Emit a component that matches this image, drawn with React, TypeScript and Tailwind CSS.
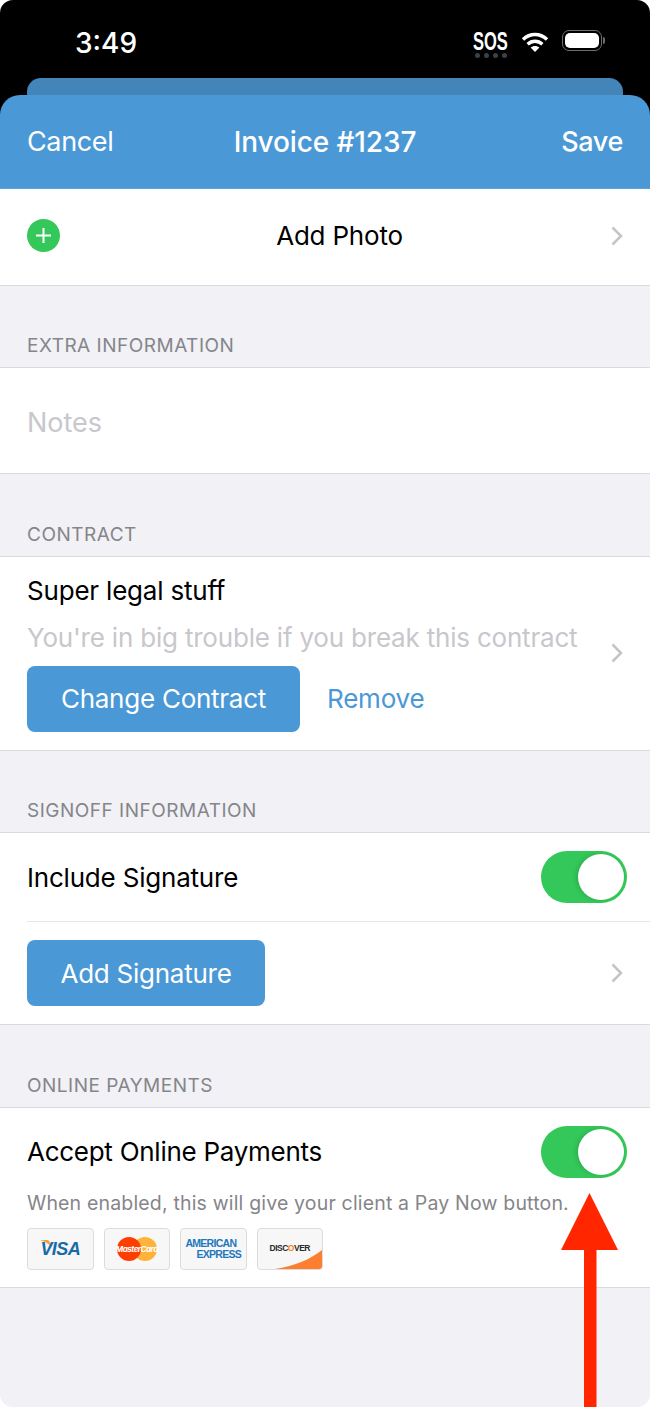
const font = { fontFamily: "Inter, 'Liberation Sans', sans-serif" };
const arial = { fontFamily: "'Liberation Sans', sans-serif" };

function Chevron() {
  return (
    <svg width="12" height="20" viewBox="0 0 12 20" fill="none" stroke="#c4c4c8" strokeWidth="2.5">
      <path d="M1.5 1.5L10 10L1.5 18.5" />
    </svg>
  );
}

function SectionLabel({ title, height }: { title: string; height: string }) {
  return (
    <div className={`flex items-end border-b border-[#d9d9de] px-[27px] pb-[9px] ${height}`}>
      <span className="text-[19px] leading-[24px] tracking-[0.5px] text-[#85858a]">{title}</span>
    </div>
  );
}

function Toggle() {
  return (
    <div className="flex h-[52px] w-[86px] items-center justify-end rounded-full bg-[#34c759] p-[3px]">
      <div className="h-[46px] w-[46px] rounded-full bg-white shadow-[-2px_0_4px_rgba(0,0,0,0.12)]" />
    </div>
  );
}

function BlueButton({ label, width }: { label: string; width: string }) {
  return (
    <div className={`flex h-[66px] items-center justify-center rounded-[8px] bg-[#4a98d6] text-[26px] tracking-[-0.25px] text-white ${width}`}>
      {label}
    </div>
  );
}

function CardLogo({ children }: { children: React.ReactNode }) {
  return (
    <div className="relative flex h-[42px] w-[66.5px] items-center justify-center overflow-hidden rounded-[4px] border border-[#dcdcdc] bg-[#f7f7f7]">
      {children}
    </div>
  );
}

export default function App() {
  return (
    <div className="relative h-[1407px] w-[650px] overflow-hidden bg-white" style={font}>
      <div className="h-full overflow-hidden rounded-[13px] bg-[#f1f1f6]">
        <div className="bg-black">
          <div className="flex h-[78px] items-start justify-between pl-[75px] pr-[45px] pt-[26px]">
            <span className="text-[28px] font-medium leading-[34px] text-white">3:49</span>
            <div className="flex items-start gap-[13px] pt-[4px]">
              <div className="flex w-[35px] flex-col items-center">
                <span className="scale-x-[0.66] text-[25px] font-bold leading-[22px] text-white" style={arial}>SOS</span>
                <div className="mt-[1px] flex gap-[4px]">
                  <i className="h-[5px] w-[5px] rounded-full bg-[#3c4048]" />
                  <i className="h-[5px] w-[5px] rounded-full bg-[#3c4048]" />
                  <i className="h-[5px] w-[5px] rounded-full bg-[#3c4048]" />
                  <i className="h-[5px] w-[5px] rounded-full bg-[#3c4048]" />
                </div>
              </div>
              <svg width="28" height="22" viewBox="0 0 28 22" className="mt-[1px]" fill="none" stroke="#fff" strokeWidth="3.4">
                <path d="M2 8.5C9 1.8 19 1.8 26 8.5" />
                <path d="M6.6 13.2C11 9.2 17 9.2 21.4 13.2" />
                <path d="M14 21L9.6 16.6C12 14.4 16 14.4 18.4 16.6Z" fill="#fff" stroke="none" />
              </svg>
              <div className="flex items-center">
                <div className="flex h-[21px] w-[40px] items-center rounded-[7px] border border-[#6d6d70] p-[2px]">
                  <div className="h-full w-full rounded-[5px] bg-white" />
                </div>
                <div className="ml-[1px] h-[7px] w-[2px] rounded-r-full bg-[#6d6d70]" />
              </div>
            </div>
          </div>
          <div className="mx-[27px] h-[17px] rounded-t-[14px] bg-[#4485b9]" />
        </div>

        <div className="bg-black">
          <div className="grid h-[94px] grid-cols-[1fr_auto_1fr] items-start rounded-t-[20px] border-b border-[#5fa3db] bg-[#4a98d6] px-[27px] pt-[27px] text-[27px] leading-[40px] tracking-[-0.35px] text-white">
            <span>Cancel</span>
            <span className="text-[28px] font-medium tracking-[-0.1px]">Invoice #1237</span>
            <span className="text-right font-medium">Save</span>
          </div>
        </div>

        <div className="flex h-[97px] items-center border-b border-[#d9d9de] bg-white px-[27px]">
          <div className="mb-[3px] flex h-[33px] w-[33px] items-center justify-center rounded-full bg-[#34c759]">
            <svg width="17" height="17" viewBox="0 0 17 17" stroke="#fff" strokeWidth="2">
              <path d="M8.5 1v15M1 8.5h15" />
            </svg>
          </div>
          <span className="mb-[3px] flex-1 pl-[8px] text-center text-[26px] tracking-[-0.2px] text-black">Add Photo</span>
          <div className="mb-[3px]">
            <Chevron />
          </div>
        </div>

        <SectionLabel title="EXTRA INFORMATION" height="h-[82px]" />
        <div className="flex h-[106px] items-center border-b border-[#d9d9de] bg-white px-[27px] pt-[6px] text-[27px] text-[#c7c7cc]">
          Notes
        </div>

        <SectionLabel title="CONTRACT" height="h-[83px]" />
        <div className="flex h-[194px] items-center justify-between border-b border-[#d9d9de] bg-white px-[27px] pb-[2px]">
          <div>
            <div className="text-[26px] leading-[34px] tracking-[-0.2px] text-black">Super legal stuff</div>
            <div className="mt-[13px] text-[26px] leading-[34px] tracking-[-0.2px] text-[#c7c7cc]">You're in big trouble if you break this contract</div>
            <div className="mt-[11px] flex items-center gap-[27px]">
              <BlueButton label="Change Contract" width="w-[273px]" />
              <span className="text-[26px] tracking-[-0.2px] text-[#4a98d6]">Remove</span>
            </div>
          </div>
          <Chevron />
        </div>

        <SectionLabel title="SIGNOFF INFORMATION" height="h-[82px]" />
        <div className="bg-white">
          <div className="ml-[27px] flex h-[89px] items-center justify-between border-b border-[#e5e5ea] pr-[23px]">
            <span className="text-[26px] tracking-[-0.2px] text-black">Include Signature</span>
            <Toggle />
          </div>
          <div className="flex h-[103px] items-center justify-between border-b border-[#d9d9de] px-[27px]">
            <BlueButton label="Add Signature" width="w-[238px]" />
            <Chevron />
          </div>
        </div>

        <SectionLabel title="ONLINE PAYMENTS" height="h-[83px]" />
        <div className="h-[180px] border-b border-[#d9d9de] bg-white pl-[27px] pr-[23px] pt-[18px]">
          <div className="flex items-center justify-between">
            <span className="mb-[2px] text-[26px] tracking-[-0.27px] text-black">Accept Online Payments</span>
            <Toggle />
          </div>
          <div className="mt-[12px] whitespace-nowrap text-[19.5px] leading-[26px] tracking-[0.17px] text-[#85858a]">
            When enabled, this will give your client a Pay Now button.
          </div>
          <div className="mt-[12px] flex gap-[10px]">
            <CardLogo>
              <svg width="12" height="8" viewBox="0 0 12 8" className="absolute left-[12px] top-[11px]">
                <path d="M0 0H8C10 1.5 11 4 11.5 7C9 4 5 1.5 0 0Z" fill="#f4a338" />
              </svg>
              <span className="relative text-[18px] font-bold italic tracking-[-0.6px] text-[#1a6aa8]" style={arial}>VISA</span>
            </CardLogo>
            <CardLogo>
              <svg width="40" height="24" viewBox="0 0 40 24" className="absolute">
                <circle cx="28" cy="12" r="12" fill="#ffb33a" />
                <circle cx="12" cy="12" r="12" fill="#ff3d00" />
              </svg>
              <span className="relative text-[8px] font-bold italic tracking-[-0.5px] text-white">MasterCard</span>
            </CardLogo>
            <CardLogo>
              <div className="flex flex-col text-[10.5px] font-bold leading-[11px] tracking-[-0.7px] text-[#1e78bd]" style={arial}>
                <span>AMERICAN</span>
                <span className="ml-[11px]">EXPRESS</span>
              </div>
            </CardLogo>
            <CardLogo>
              <span className="relative z-10 mb-[2px] text-[8.5px] font-bold tracking-[-0.5px] text-[#2a2a2a]" style={arial}>DISC<span className="text-[#f58220]">O</span>VER</span>
              <svg width="47" height="20" viewBox="0 0 47 20" className="absolute bottom-0 right-0">
                <path d="M0 20C20 17 36 10 47 1V20Z" fill="#fd7e2f" />
              </svg>
            </CardLogo>
          </div>
        </div>
      </div>

      <svg width="57" height="214" viewBox="0 0 57 214" className="absolute left-[561px] top-[1193px]">
        <path d="M28.5 0L0 57H23V214H35.5V57H57Z" fill="#ff2600" />
      </svg>
    </div>
  );
}
